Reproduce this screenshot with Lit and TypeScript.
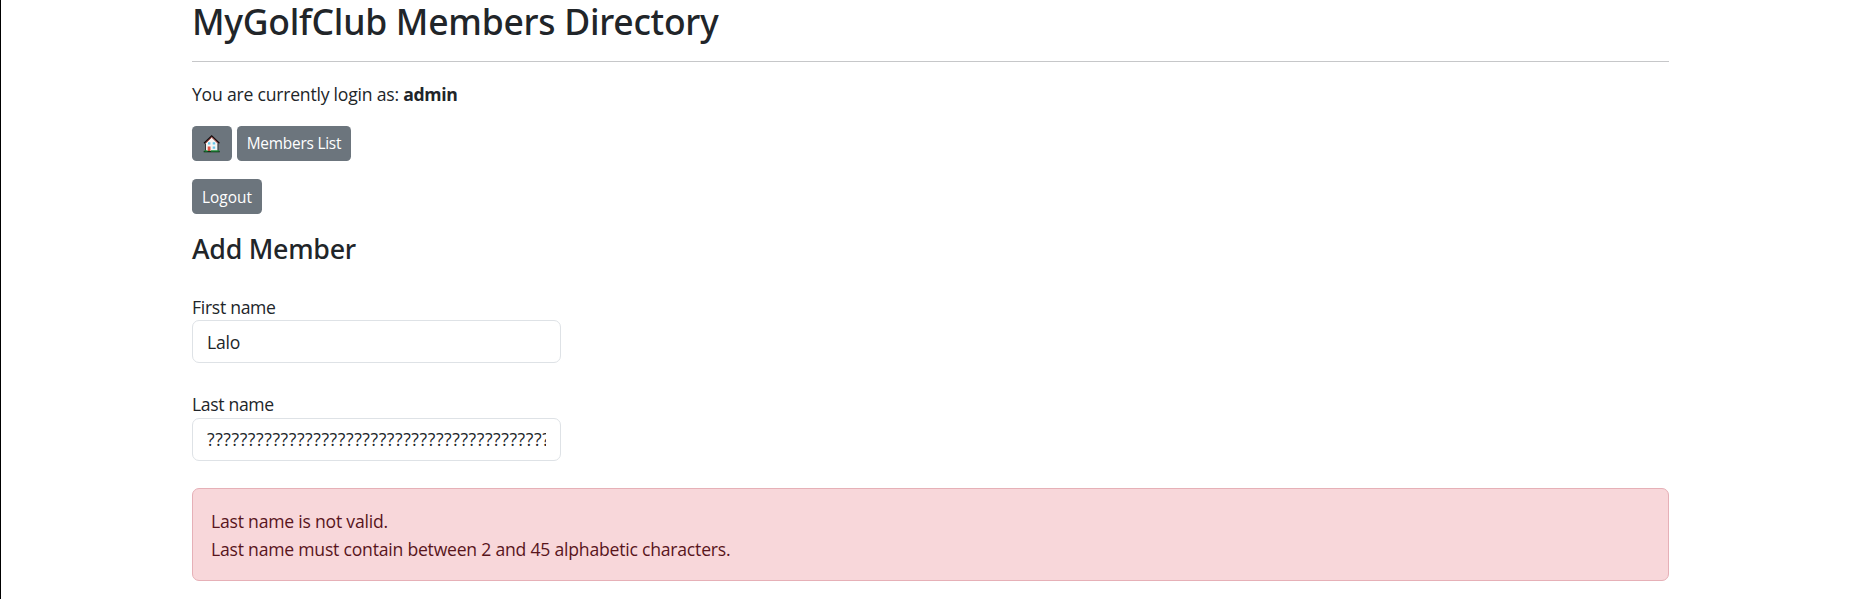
import { LitElement, html, css } from "lit";
import { customElement, state } from "lit/decorators.js";

@customElement("app-root")
export class AppRoot extends LitElement {
  static styles = css`
    :host {
      display: block;
      box-sizing: border-box;
      height: 599px;
      overflow: hidden;
      background: #fff;
      border-left: 1px solid #000;
      color: #212529;
      font: 400 17.6px/28px "Open Sans", "Noto Sans", sans-serif;
      letter-spacing: -0.22px;
    }
    .container { width: 1477px; margin-left: 191px; }
    h1, h2, p { margin: 0; }
    h1, h2 { font-family: "Noto Sans", sans-serif; font-weight: 500; }
    h1 { font-size: 35.5px; line-height: 42px; letter-spacing: -0.26px; }
    h2 { font-size: 26.8px; line-height: 32px; letter-spacing: -0.25px; margin-top: 19px; }
    hr { height: 1px; border: 0; margin: 19px 0 18px; background: #c6c7c9; }
    .status strong { font-weight: 700; letter-spacing: -0.35px; }
    .row { display: flex; gap: 5px; margin-top: 18px; }
    .btn {
      display: flex;
      align-items: center;
      justify-content: center;
      box-sizing: border-box;
      height: 35px;
      padding: 0;
      border: 0;
      border-radius: 4.5px;
      background: #6c757d;
      color: #fff;
      font: 400 15.4px/24px "Open Sans", "Noto Sans", sans-serif;
    }
    .home { width: 40px; }
    .home svg { display: block; width: 18px; height: 18px; }
    .members { width: 114px; letter-spacing: -0.22px; }
    .logout { width: 70px; padding-top: 2px; letter-spacing: 0; }
    .field { display: flex; flex-direction: column; margin-top: 27px; }
    .first { margin-top: 29px; }
    label { letter-spacing: -0.35px; }
    .first label { line-height: 26px; letter-spacing: -0.3px; }
    input {
      box-sizing: border-box;
      width: 369px;
      height: 43px;
      margin: 0;
      padding: 0 14px;
      border: 1px solid #dee2e6;
      border-radius: 7px;
      background: #fff;
      color: #212529;
      font: inherit;
      outline: none;
      letter-spacing: -0.2px;
    }
    .wide { padding-bottom: 2px; letter-spacing: 0.58px; }
    .alert {
      box-sizing: border-box;
      height: 93px;
      margin-top: 27px;
      padding: 18px;
      border: 1px solid #e6b0b7;
      border-radius: 7px;
      background: #f8d7da;
      color: #58151c;
    }
  `;

  @state() private firstName = "Lalo";
  @state() private lastName = "?".repeat(45);

  render() {
    return html`
      <main class="container">
        <h1>MyGolfClub Members Directory</h1>
        <hr />
        <p class="status">You are currently login as: <strong>admin</strong></p>
        <nav class="row">
          <button class="btn home" aria-label="Home">
            <svg viewBox="0 0 18 18">
              <path d="M2.700 8 8.700 2 14.700 8V16H2.700Z" fill="#f4f4f2" />
              <path d="M2.500 8.500V16M15 8.500V16" stroke="#262b2e" stroke-width="0.900" />
              <path d="M1 8.300 8.700 0.900 16.400 8.300" fill="none" stroke="#160d0d" stroke-width="1.300" />
              <path d="M2.500 8.300 8.700 2.300 14.900 8.300" fill="none" stroke="#a8352f" stroke-width="0.900" />
              <path d="M5 7.300h2.400v2.300H5zM9.700 7.300h2.500v2.300H9.700zM9.700 11.500h2.500v2.300H9.700z" fill="#66c5e9" />
              <path d="M4.700 11.500h2.800V16H4.700z" fill="#dd5345" />
              <path d="M0.700 15.900H16.700V17.300H0.700Z" fill="#0d3411" />
              <path d="M1.500 15.200H4.500V16.400H1.500ZM8 15.200H15.800V16.400H8Z" fill="#249643" />
            </svg>
          </button>
          <button class="btn members">Members List</button>
        </nav>
        <div class="row"><button class="btn logout">Logout</button></div>
        <h2>Add Member</h2>
        <div class="field first">
          <label for="first">First name</label>
          <input id="first" .value=${this.firstName} />
        </div>
        <div class="field">
          <label for="last">Last name</label>
          <input id="last" class="wide" .value=${this.lastName} />
        </div>
        <div class="alert" role="alert">
          <p>Last name is not valid.</p>
          <p>Last name must contain between 2 and 45 alphabetic characters.</p>
        </div>
      </main>
    `;
  }
}
